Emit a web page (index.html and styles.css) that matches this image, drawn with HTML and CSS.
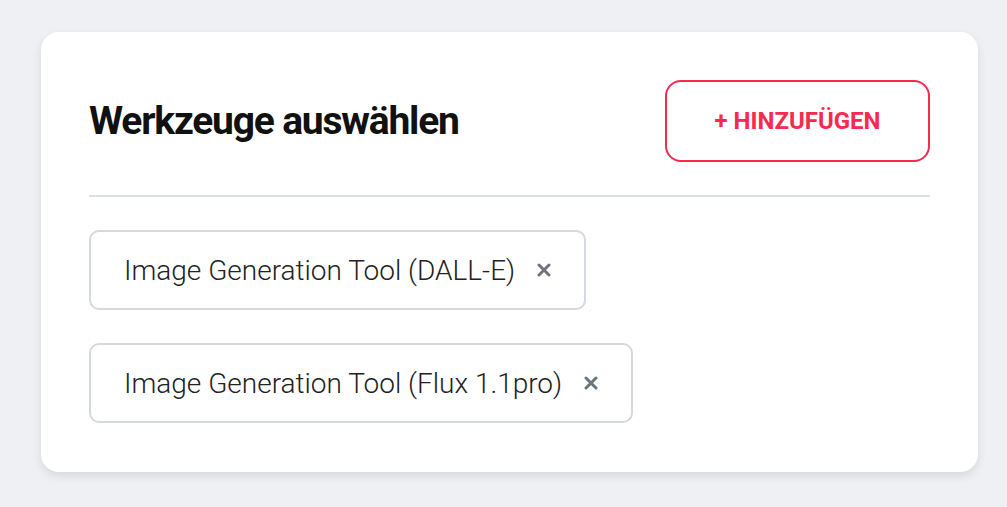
FILE: index.html
```html
<!DOCTYPE html>
<html lang="de">
<head>
<meta charset="utf-8">
<link rel="stylesheet" href="styles.css">
</head>
<body>
<div class="page">
  <section class="card">
    <header class="card-header">
      <h2 class="title">Werkzeuge auswählen</h2>
      <button class="add-btn">+ HINZUFÜGEN</button>
    </header>
    <hr class="divider">
    <div class="chips">
      <div class="chip"><span class="chip-label">Image Generation Tool (DALL-E)</span><svg class="chip-x" viewBox="0 0 14 14" width="14" height="14"><path d="M2 2 L12 12 M12 2 L2 12" stroke="currentColor" stroke-width="3" stroke-linecap="round"/></svg></div>
      <div class="chip"><span class="chip-label">Image Generation Tool (Flux 1.1pro)</span><svg class="chip-x" viewBox="0 0 14 14" width="14" height="14"><path d="M2 2 L12 12 M12 2 L2 12" stroke="currentColor" stroke-width="3" stroke-linecap="round"/></svg></div>
    </div>
  </section>
</div>
</body>
</html>
```

FILE: styles.css
```css
* { box-sizing: border-box; }
html, body { margin: 0; padding: 0; }
body {
  background: #eff0f4;
  font-family: Roboto, "Liberation Sans", sans-serif;
  width: 1007px;
  height: 507px;
  overflow: hidden;
}
.page {
  padding: 32px 29px 0 41px;
}
.card {
  width: 937px;
  background: #fff;
  border-radius: 18px;
  padding: 48px 48px 49px 48px;
  box-shadow: 0 4px 10px rgba(0, 0, 0, 0.10);
}
.card-header {
  display: flex;
  align-items: center;
  justify-content: space-between;
  height: 82px;
}
.title {
  margin: 0;
  font-size: 39px;
  font-weight: 700;
  color: #111;
  letter-spacing: -1.2px;
}
.add-btn {
  width: 265px;
  height: 82px;
  border: 2px solid #f8294f;
  border-radius: 16px;
  background: #fff;
  color: #f8294f;
  font-family: Roboto, "Liberation Sans", sans-serif;
  font-weight: 700;
  font-size: 24px;
  padding: 0;
}
.divider {
  border: 0;
  border-top: 2px solid #dde0e4;
  margin: 33px 0 33px 0;
}
.chips {
  display: flex;
  flex-direction: column;
  align-items: flex-start;
  gap: 33px;
}
.chip {
  display: flex;
  align-items: center;
  height: 80px;
  padding: 0 33px 0 33px;
  border: 2px solid #d5d8dc;
  border-radius: 10px;
  gap: 22px;
}
.chip-label {
  font-size: 28px;
  font-weight: 300;
  color: #222;
}
.chip-x {
  color: #6c757d;
  display: block;
}
```
